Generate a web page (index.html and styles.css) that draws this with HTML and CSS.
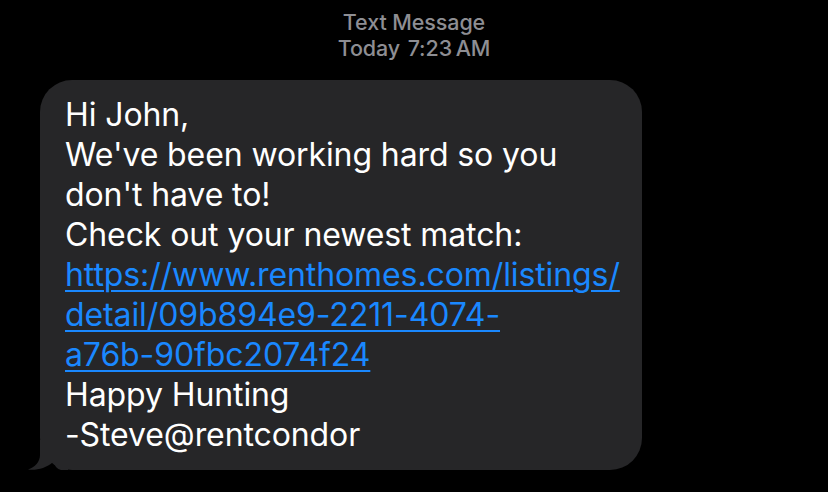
FILE: index.html
```html
<!DOCTYPE html>
<html>
<head>
<meta charset="utf-8">
<link rel="stylesheet" href="styles.css">
</head>
<body>
<div class="screen">
  <header class="meta">
    <div class="meta-title">Text Message</div>
    <div class="meta-time"><span class="day">Today</span> 7:23&#8201;AM</div>
  </header>
  <div class="row">
    <div class="bubble">
      <p class="msg">Hi John,<br>We've been working hard so you<br>don't have to!<br>Check out your newest match:<br><a class="link" href="#">https://www.renthomes.com/listings/<br>detail/09b894e9-2211-4074-<br>a76b-90fbc2074f24</a><br>Happy Hunting<br>-Steve@rentcondor</p>
      <svg class="tail" width="40" height="30" viewBox="0 0 40 30"><path d="M12 0 L12 15 C12 22 7 27 0 29.5 C8 30.5 18 28.5 25 22 C27 26 29 29 33 30 L40 30 L40 0 Z" fill="#262628"/></svg>
    </div>
  </div>
</div>
</body>
</html>
```

FILE: styles.css
```css
html, body {
  margin: 0;
  padding: 0;
  background: #000;
}
.screen {
  width: 828px;
  height: 492px;
  background: #000;
  overflow: hidden;
  font-family: Inter, "Noto Sans", sans-serif;
}
.meta {
  display: flex;
  flex-direction: column;
  align-items: center;
  color: #8e8e93;
  font-size: 21.5px;
  font-weight: 500;
  line-height: 26px;
  padding: 9px 0 0 0;
  letter-spacing: -0.1px;
}
.day { font-weight: 500; margin-right: 2px; }
.row {
  display: flex;
  padding: 19px 0 0 40px;
}
.bubble {
  position: relative;
  width: 602px;
  box-sizing: border-box;
  background: #262628;
  border-radius: 32px;
  padding: 15px 10px 15px 25px;
}
.msg {
  margin: 0;
  color: #fff;
  font-size: 32px;
  line-height: 40px;
  letter-spacing: -0.1px;
  white-space: nowrap;
}
.link {
  color: #1a88ff;
  text-decoration: underline;
  text-decoration-thickness: 2px;
  text-underline-offset: 4px;
}
.tail {
  position: absolute;
  left: -12px;
  bottom: 0;
}
```
